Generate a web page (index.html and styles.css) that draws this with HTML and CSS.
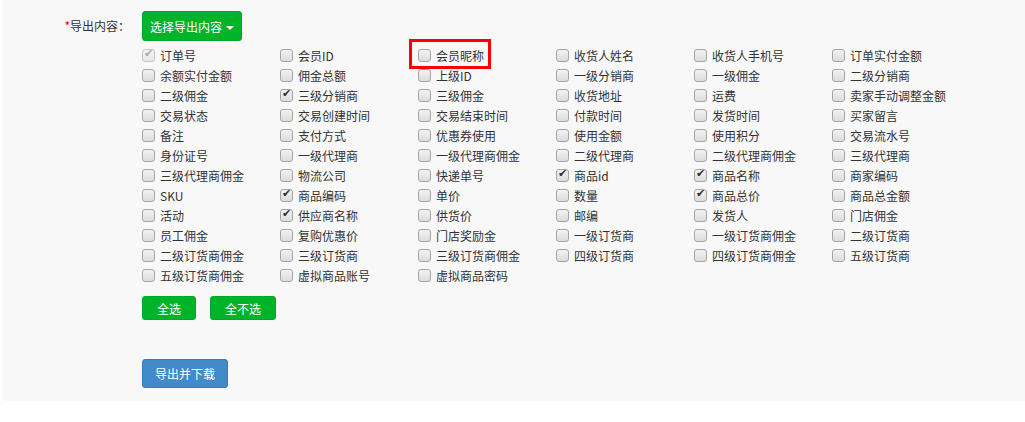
FILE: index.html
```html
<html>
	<head>
	<meta charset="utf-8">
	<title>导出</title>
	<link rel="stylesheet" href="styles.css">
	</head>
	<body>
	<div class="panel">
		<div class="row">
			<div class="label"><span class="star">*</span>导出内容：</div>
			<div class="field">
				<button class="btn green pick">选择导出内容 <span class="caret"></span></button>
				<div class="grid" id="grid"></div>
				<div class="actions">
					<button class="btn green small">全选</button>
					<button class="btn green small wide">全不选</button>
				</div>
				<button class="btn blue">导出并下载</button>
			</div>
		</div>
	</div>
	<script>
		var items = [
			"订单号","会员ID","会员昵称","收货人姓名","收货人手机号","订单实付金额",
			"余额实付金额","佣金总额","上级ID","一级分销商","一级佣金","二级分销商",
			"二级佣金","三级分销商","三级佣金","收货地址","运费","卖家手动调整金额",
			"交易状态","交易创建时间","交易结束时间","付款时间","发货时间","买家留言",
			"备注","支付方式","优惠券使用","使用金额","使用积分","交易流水号",
			"身份证号","一级代理商","一级代理商佣金","二级代理商","二级代理商佣金","三级代理商",
			"三级代理商佣金","物流公司","快递单号","商品id","商品名称","商家编码",
			"SKU","商品编码","单价","数量","商品总价","商品总金额",
			"活动","供应商名称","供货价","邮编","发货人","门店佣金",
			"员工佣金","复购优惠价","门店奖励金","一级订货商","一级订货商佣金","二级订货商",
			"二级订货商佣金","三级订货商","三级订货商佣金","四级订货商","四级订货商佣金","五级订货商",
			"五级订货商佣金","虚拟商品账号","虚拟商品密码"
		]
		var checked = ["三级分销商","商品id","商品名称","商品编码","商品总价","供应商名称"]
		var grid = document.getElementById("grid")

		items.forEach(function(name){
			var label = document.createElement("label")
			label.className = "item"
			if(name == "会员昵称") label.className += " marked"
			var box = document.createElement("input")
			box.type = "checkbox"
			if(name == "订单号"){ box.checked = true; box.disabled = true }
			if(checked.indexOf(name) >= 0) box.checked = true
			label.appendChild(box)
			var text = document.createElement("span")
			text.innerText = name
			label.appendChild(text)
			grid.appendChild(label)
		})
	</script>
	</body>
</html>
```

FILE: styles.css
```css
body{margin: 0;font-family: "Noto Sans CJK SC", "Microsoft YaHei", sans-serif;font-size: 12px;color: #333;background: #fff;}
.panel{
	margin-left: 2px;
	height: 401px;
	box-sizing: border-box;
	padding-top: 11px;
	background-color: #f8f8f8;
}
.row{display: flex;}
.label{
	width: 128px;
	padding-right: 12px;
	text-align: right;
	font-size: 12px;
	line-height: 30px;
}
.star{color: #e00;}
.field{display: flex;flex-direction: column;align-items: flex-start;}

.btn{
	border: 1px solid transparent;
	border-radius: 3px;
	color: #fff;
	font-family: inherit;
	font-size: 12px;
	cursor: pointer;
	padding: 0 12px;
}
.green{background-color: #00b42a;border-color: #00a826;}
.blue{background-color: #428bca;border-color: #357ebd;height: 29px;padding: 0 12px;margin-top: 39px;}
.pick{height: 30px;padding: 0 7px;font-size: 12px;}
.caret{
	display: inline-block;
	width: 0;height: 0;
	margin-left: 1px;
	vertical-align: middle;
	border-top: 4px solid #fff;
	border-left: 4px solid transparent;
	border-right: 4px solid transparent;
}

.grid{
	display: grid;
	grid-template-columns: repeat(6, 138px);
	grid-auto-rows: 20px;
	margin-top: 4px;
}
.item{display: flex;align-items: center;white-space: nowrap;position: relative;}
.item input{
	-webkit-appearance: none;
	appearance: none;
	width: 13px;height: 13px;
	margin: 0 5px 0 0;
	border: 1px solid #a6a6a6;
	border-radius: 3px;
	background: linear-gradient(#f2f2f2, #dcdcdc);
	position: relative;
	box-sizing: border-box;
}
.item input:checked::after{
	content: "✔";
	position: absolute;
	left: 1px;top: -3px;
	font-size: 11px;
	color: #333;
}
.item input:disabled{border-color: #c8c8c8;background: linear-gradient(#f4f4f4, #e6e6e6);}
.item input:disabled::after{color: #aaa;}

.marked{outline: 3px solid #f00;margin: -3px 0 -1px -6px;padding: 3px 0 1px 6px;width: 70px;}

.actions{display: flex;gap: 14px;margin-top: 11px;}
.small{height: 24px;width: 54px;padding: 0;}
.wide{width: 66px;}
```
